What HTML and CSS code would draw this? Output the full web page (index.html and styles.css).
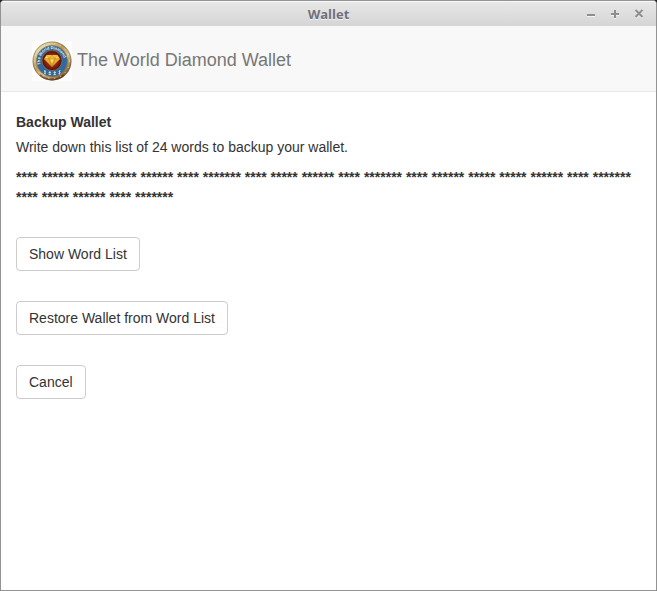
FILE: index.html
```html
<!DOCTYPE html>
<html lang="en">
<head>
<meta charset="utf-8">
<meta name="viewport" content="width=device-width, initial-scale=1">
<title>Wallet</title>
<link rel="stylesheet" href="styles.css">
</head>
<body>
<div class="window">
  <div class="titlebar">
    <span class="title">Wallet</span>
    <div class="controls">
      <button type="button" class="control" aria-label="Minimize"><svg viewBox="0 0 10 10"><path d="M1 6h8"/></svg></button>
      <button type="button" class="control" aria-label="Maximize"><svg viewBox="0 0 10 10"><path d="M1 5h8M5 1v8"/></svg></button>
      <button type="button" class="control" aria-label="Close"><svg viewBox="0 0 10 10"><path d="M1.500 1l7 7M8.500 1l-7 7"/></svg></button>
    </div>
  </div>
  <header class="navbar">
    <svg class="logo" viewBox="0 0 40 40" aria-hidden="true">
      <defs>
        <linearGradient id="gold" x1="0" y1="0" x2=".8" y2="1">
          <stop offset="0" stop-color="#a88a50"/>
          <stop offset=".2" stop-color="#e6d8aa"/>
          <stop offset=".45" stop-color="#b8965a"/>
          <stop offset=".65" stop-color="#d8c490"/>
          <stop offset="1" stop-color="#6b4420"/>
        </linearGradient>
        <radialGradient id="ruby">
          <stop offset="0" stop-color="#b04a18"/>
          <stop offset=".65" stop-color="#8a220f"/>
          <stop offset="1" stop-color="#4a0f0c"/>
        </radialGradient>
        <linearGradient id="gem" x1="0" y1="0" x2="0" y2="1">
          <stop offset="0" stop-color="#f6c53c"/>
          <stop offset="1" stop-color="#e0951a"/>
        </linearGradient>
        <path id="arc" d="M8.500 23.500A12 12 0 1 1 31.500 23.500"/>
      </defs>
      <rect width="40" height="40" fill="#fff"/>
      <circle cx="20" cy="20" r="19.500" fill="url(#gold)"/>
      <circle cx="20" cy="20" r="19" fill="none" stroke="#6e522c" opacity=".5"/>
      <path d="M8 34a18.500 18.500 0 0 0 24 0" fill="none" stroke="#5a2c10" stroke-width="2" opacity=".6"/>
      <circle cx="20" cy="20" r="17.500" fill="none" stroke="#f0e2b4" stroke-dasharray="1 5"/>
      <circle cx="20" cy="20" r="15.500" fill="#2f69a0" stroke="#8a7448" stroke-width=".6"/>
      <text class="logo-text"><textPath href="#arc">The World Diamond</textPath></text>
      <path d="M12 30l2 1m-2 1l2 1m-1-4v4M16.500 31.500h2.500m-2.500 2h2.500m-1.200-3.500v4M21.500 31.500h2.500m-2.500 2h2.500m-1.300-3.500v4M26.500 30.500l2-1m-2 3l2-1m-1-2v4" fill="none" stroke="#e6e1c8" stroke-width=".8"/>
      <circle cx="20" cy="19.500" r="10" fill="url(#ruby)" stroke="#9c7a4a" stroke-width=".6"/>
      <path d="M14.500 14h11l2.500 4-8 8-8-8z" fill="url(#gem)"/>
      <path d="M12 18h16M14.500 14l2.500 4 3-4 3 4 2.500-4M17 18l3 8 3-8" fill="none" stroke="#b8741a" stroke-width=".4"/>
      <path d="M15 15l-1.500 2h2.500zM18.500 18.500h3l-1.500 4zM25 15l-1 2h2z" fill="#ffe680"/>
    </svg>
    <span class="brand">The World Diamond Wallet</span>
  </header>
  <main class="content">
    <h1 class="heading">Backup Wallet</h1>
    <p class="intro">Write down this list of 24 words to backup your wallet.</p>
    <p class="words">**** ****** ***** ***** ****** **** ******* **** ***** ****** **** ******* **** ****** ***** ***** ****** **** ******* **** ***** ****** **** *******</p>
    <div class="actions">
      <button type="button" class="btn">Show Word List</button>
      <button type="button" class="btn">Restore Wallet from Word List</button>
      <button type="button" class="btn">Cancel</button>
    </div>
  </main>
</div>
</body>
</html>
```
FILE: styles.css
```css
* {
  box-sizing: border-box;
}

body {
  margin: 0;
  background: #222;
  color: #333;
  font: 14px/20px "Liberation Sans", Arial, sans-serif;
}

.window {
  min-height: 100vh;
  border: 1px solid #939393;
  border-radius: 4px 4px 0 0;
  background: #fff;
  overflow: hidden;
}

.titlebar {
  display: grid;
  grid-template-columns: 1fr auto 1fr;
  align-items: center;
  height: 25px;
  padding: 0 12px;
  border-top: 1px solid #fafafa;
  background: linear-gradient(#e7e7e7, #d5d5d5);
}

.title {
  grid-column: 2;
  color: #70707a;
  font: bold 13px/20px "Open Sans", "Noto Sans", sans-serif;
  text-shadow: 0 1px #f2f2f2;
}

.controls {
  display: flex;
  justify-content: flex-end;
  gap: 14px;
}

.control {
  width: 10px;
  height: 10px;
  padding: 0;
  border: 0;
  background: none;
}

.control svg {
  display: block;
  fill: none;
  stroke: #8e8e8e;
  stroke-width: 2;
  filter: drop-shadow(0 1px #f4f4f4);
}

.navbar {
  display: flex;
  align-items: flex-start;
  gap: 5px;
  height: 66px;
  padding: 15px 31px 0;
  border-bottom: 1px solid #e7e7e7;
  background: #f8f8f8;
}

.logo {
  width: 40px;
  height: 40px;
}

.logo-text {
  fill: #f2efe0;
  font: bold 4px "Liberation Sans", sans-serif;
}

.brand {
  color: #777;
  font-size: 18px;
  line-height: 38px;
}

.content {
  padding: 20px 15px;
}

.heading {
  margin: 0 0 5px;
  font-size: 14px;
}

.intro {
  margin: 0 0 10px;
}

.words {
  margin: 0 0 30px;
  font-weight: bold;
}

.actions {
  display: flex;
  flex-direction: column;
  align-items: flex-start;
  gap: 30px;
}

.btn {
  padding: 6px 12px;
  border: 1px solid #ccc;
  border-radius: 4px;
  background: #fff;
  color: #333;
  font: inherit;
}
```
